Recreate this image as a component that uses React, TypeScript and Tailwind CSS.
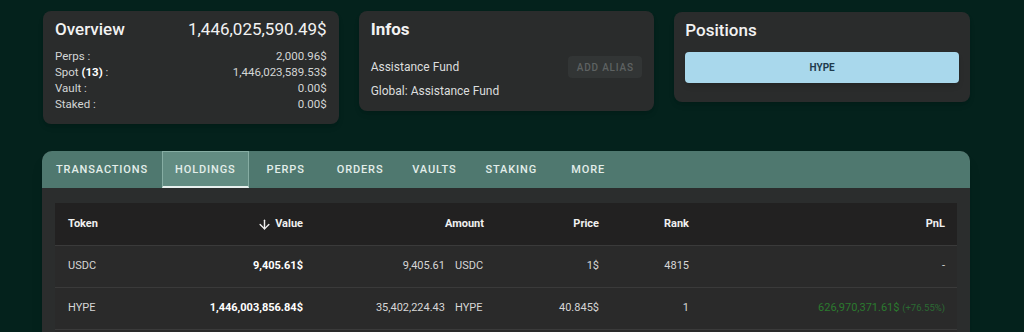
import React from 'react';
import { ArrowDown } from 'lucide-react';

const tabs = ['TRANSACTIONS', 'HOLDINGS', 'PERPS', 'ORDERS', 'VAULTS', 'STAKING', 'MORE'];

const cols = 'grid grid-cols-[120px_141px_181px_115px_90px_255px]';

export default function App() {
  return (
    <div
      className="h-[332px] w-[1024px] overflow-hidden bg-[#04221c] pt-[11px] pl-[43px]"
      style={{ fontFamily: 'Roboto, "Liberation Sans", sans-serif' }}
    >
      {/* Summary cards */}
      <div className="grid w-[927px] grid-cols-3 items-start gap-[20px]">
        <div className="rounded-lg bg-[#2a2c2c] px-3 pt-[10px] pb-3 shadow-md">
          <div className="flex items-center justify-between text-[17px] leading-4 text-[#f2f2f2]">
            <span className="font-medium">Overview</span>
            <span>1,446,025,590.49$</span>
          </div>
          <div className="mt-[11px] text-[11.5px] leading-4 text-[#d4d6d6]">
            <div className="flex justify-between"><span>Perps :</span><span>2,000.96$</span></div>
            <div className="flex justify-between"><span>Spot <b className="font-bold text-white">(13)</b> :</span><span>1,446,023,589.53$</span></div>
            <div className="flex justify-between"><span>Vault :</span><span>0.00$</span></div>
            <div className="flex justify-between"><span>Staked :</span><span>0.00$</span></div>
          </div>
        </div>

        <div className="rounded-lg bg-[#2a2c2c] px-3 pt-[10px] pb-3 shadow-md">
          <div className="text-[17px] font-bold leading-4 text-[#f2f2f2]">Infos</div>
          <div className="mt-[19px] flex items-center justify-between">
            <span className="text-[12px] text-[#dcdede]">Assistance Fund</span>
            <button className="h-[22px] w-[74px] rounded bg-[#323535] text-[10px] font-medium tracking-[0.08em] text-[#5e6262]">
              ADD ALIAS
            </button>
          </div>
          <div className="mt-[5px] text-[12px] leading-4 text-[#dcdede]">Global: Assistance Fund</div>
        </div>

        <div className="mt-px rounded-lg bg-[#2a2c2c] px-[11px] pt-[10px] pb-[19px] shadow-md">
          <div className="text-[17px] font-medium leading-4 text-[#f2f2f2]">Positions</div>
          <button className="mt-[14px] flex h-[31px] w-full items-center justify-center rounded-sm bg-[#a9d8ec] text-[10px] font-bold text-[#1f3b4c] shadow-md">
            HYPE
          </button>
        </div>
      </div>

      {/* Tabs panel */}
      <div className="mt-[27px] -ml-px w-[928px] overflow-hidden rounded-t-[10px] bg-[#2b2d2d] shadow-lg">
        <div className="flex h-[37px] bg-[#4f786f]">
          {tabs.map((t) => (
            <div
              key={t}
              className={
                'flex min-w-[74px] items-center justify-center pt-[2px] text-[11px] font-medium tracking-[0.08em] text-[#e3eeea] ' +
                (t === 'HOLDINGS'
                  ? 'border border-b-2 border-[#86ada3] border-b-[#e8f0ee] bg-[#628c82] px-[12px]'
                  : 'px-[14px]')
              }
            >
              {t}
            </div>
          ))}
        </div>

        <div className="px-[13px] pt-[15px]">
          <div className="bg-[#2a2a2a] text-[11px]">
            <div className={cols + ' h-[42px] items-center bg-[#222121] font-bold text-[#f0f0f0]'}>
              <div className="pl-[13px]">Token</div>
              <div className="flex items-center justify-end gap-[3px] pr-[13px]">
                <ArrowDown size={15} strokeWidth={2.25} />
                <span>Value</span>
              </div>
              <div className="pr-[13px] text-right">Amount</div>
              <div className="pr-[13px] text-right">Price</div>
              <div className="pr-[13px] text-right">Rank</div>
              <div className="pr-[12px] text-right">PnL</div>
            </div>

            <div className={cols + ' h-[42px] items-center border-t border-[#3a3a3a] text-[#d6d6d6]'}>
              <div className="pl-[13px]">USDC</div>
              <div className="pr-[13px] text-right font-bold text-white">9,405.61$</div>
              <div className="flex justify-end gap-[10px] pr-[13px]">
                <span>9,405.61</span>
                <span className="w-[29px]">USDC</span>
              </div>
              <div className="pr-[13px] text-right">1$</div>
              <div className="pr-[13px] text-right">4815</div>
              <div className="pr-[12px] text-right">-</div>
            </div>

            <div className={cols + ' h-[42px] items-center border-t border-[#3a3a3a] text-[#d6d6d6]'}>
              <div className="pl-[13px]">HYPE</div>
              <div className="pr-[13px] text-right font-bold text-white">1,446,003,856.84$</div>
              <div className="flex justify-end gap-[10px] pr-[13px]">
                <span>35,402,224.43</span>
                <span className="w-[29px]">HYPE</span>
              </div>
              <div className="pr-[13px] text-right">40.845$</div>
              <div className="pr-[13px] text-right">1</div>
              <div className="pr-[12px] text-right text-[#2b7a2e]">
                626,970,371.61$ <span className="text-[9.5px] text-[#2a6a33]">(+76.55%)</span>
              </div>
            </div>

            <div className="h-[10px] border-t border-[#3a3a3a]" />
          </div>
        </div>
      </div>
    </div>
  );
}
